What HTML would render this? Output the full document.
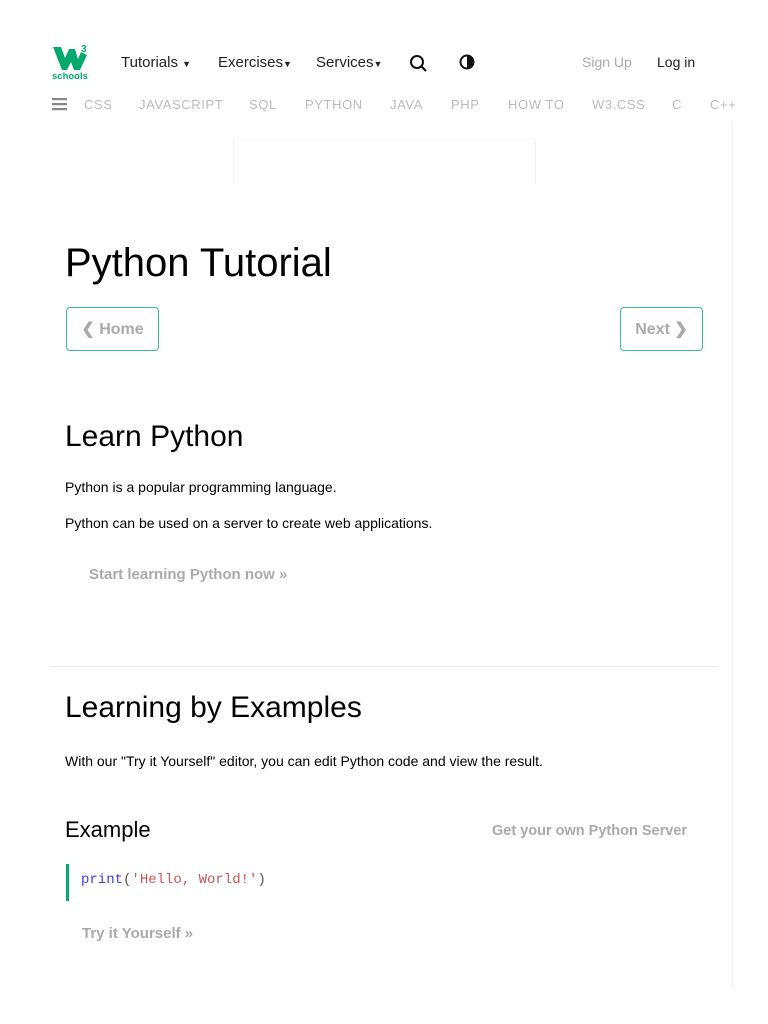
<!DOCTYPE html>
<html><head><meta charset="utf-8"><style>
*{margin:0;padding:0;box-sizing:border-box}
body{width:768px;height:1024px;background:#fff;font-family:"Liberation Sans",sans-serif;color:#000;position:relative;overflow:hidden}
.a{position:absolute;white-space:nowrap}
.nav{font-size:15px;color:#222}
.nav b{font-size:9px;font-weight:normal}
.top{font-size:13px;color:#bbb;letter-spacing:0.6px}
.btn{position:absolute;border:1.5px solid #3dbd8a;border-radius:4px;color:#aaa;font-size:16px;font-weight:bold;display:flex;align-items:center;justify-content:center}
.gray{color:#aaa;font-weight:bold}
</style></head><body>
<svg class="a" style="left:50px;top:42px" width="42" height="40" viewBox="0 0 42 40">
<path d="M3 5 L11 5 L15 16 L19 7 L25 7 L28 17 L31 10 L37 13 L30 28 L24 28 L21 20 L17 28 L12 28 Z" fill="#04aa6d"/>
<text x="31" y="10" font-size="10" font-weight="bold" fill="#04aa6d" font-family="Liberation Sans">3</text>
<text x="2" y="37" font-size="9.5" font-weight="bold" fill="#04aa6d" font-family="Liberation Sans">schools</text>
</svg>
<div class="a nav" style="left:121px;top:54px">Tutorials <b>▼</b></div>
<div class="a nav" style="left:218px;top:54px">Exercises<b>▼</b></div>
<div class="a nav" style="left:316px;top:54px">Services<b>▼</b></div>
<svg class="a" style="left:409px;top:54px" width="20" height="20" viewBox="0 0 20 20"><circle cx="8" cy="8" r="6" fill="none" stroke="#111" stroke-width="2"/><path d="M12.5 12.5 L17 17" stroke="#111" stroke-width="2.2"/></svg>
<svg class="a" style="left:459px;top:54px" width="16" height="16" viewBox="0 0 16 16"><circle cx="8" cy="8" r="6.5" fill="#fff" stroke="#111" stroke-width="2"/><path d="M8 1.5 A6.5 6.5 0 0 1 8 14.5 Z" fill="#111"/></svg>
<div class="a" style="left:582px;top:54px;font-size:14px;color:#aaa">Sign Up</div>
<div class="a" style="left:657px;top:54px;font-size:14px;color:#222">Log in</div>
<svg class="a" style="left:52px;top:97px" width="15" height="14"><rect y="1" width="15" height="2.2" fill="#888"/><rect y="6" width="15" height="2.2" fill="#888"/><rect y="11" width="15" height="2.2" fill="#888"/></svg>
<div class="a top" style="left:84px;top:97px">CSS</div>
<div class="a top" style="left:139px;top:97px">JAVASCRIPT</div>
<div class="a top" style="left:249px;top:97px">SQL</div>
<div class="a top" style="left:305px;top:97px">PYTHON</div>
<div class="a top" style="left:390px;top:97px">JAVA</div>
<div class="a top" style="left:451px;top:97px">PHP</div>
<div class="a top" style="left:508px;top:97px">HOW TO</div>
<div class="a top" style="left:592px;top:97px">W3.CSS</div>
<div class="a top" style="left:672px;top:97px">C</div>
<div class="a top" style="left:710px;top:97px">C++</div>
<div class="a" style="left:233px;top:139px;width:303px;height:45px;border-left:1px solid #f0f4f8;border-right:1px solid #f0f4f8;border-top:1px solid #f0f8fc"></div>
<div class="a" style="left:732px;top:122px;width:1px;height:866px;background:#eee"></div>
<div class="a" style="left:65px;top:241px;font-size:40px">Python Tutorial</div>
<div class="btn" style="left:66px;top:307px;width:93px;height:44px">❮ Home</div>
<div class="btn" style="left:620px;top:307px;width:83px;height:44px">Next ❯</div>
<div class="a" style="left:65px;top:420px;font-size:30px">Learn Python</div>
<div class="a" style="left:65px;top:479px;font-size:14px">Python is a popular programming language.</div>
<div class="a" style="left:65px;top:515px;font-size:14px">Python can be used on a server to create web applications.</div>
<div class="a gray" style="left:89px;top:566px;font-size:15px">Start learning Python now »</div>
<div class="a" style="left:51px;top:666px;width:666px;height:1px;background:#e8e8e8"></div>
<div class="a" style="left:65px;top:691px;font-size:30px">Learning by Examples</div>
<div class="a" style="left:65px;top:753px;font-size:14px">With our "Try it Yourself" editor, you can edit Python code and view the result.</div>
<div class="a" style="left:65px;top:817px;font-size:22px">Example</div>
<div class="a gray" style="left:492px;top:823px;font-size:14.5px">Get your own Python Server</div>
<div class="a" style="left:66px;top:864px;width:3px;height:37px;background:#04aa6d"></div>
<div class="a" style="left:81px;top:872px;font-family:'Liberation Mono',monospace;font-size:14px"><span style="color:#3e3ee0">print</span><span style="color:#555">(</span><span style="color:#c55">'Hello, World!'</span><span style="color:#555">)</span></div>
<div class="a gray" style="left:82px;top:925px;font-size:15px">Try it Yourself »</div>
</body></html>
